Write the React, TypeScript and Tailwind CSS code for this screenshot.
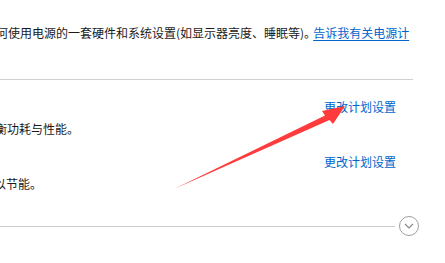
import React from "react";

export default function App() {
  const font = { fontFamily: '"Noto Sans CJK SC", "Noto Sans", sans-serif' };
  return (
    <div
      className="relative w-[445px] h-[263px] overflow-hidden bg-white text-[12px] leading-[16px] text-[#1a1a1a]"
      style={font}
    >
      <div className="flex flex-col">
        <div className="h-[80px] w-[413px] border-b border-[#d0d0d0] pt-[25px]">
          <div className="flex ml-[-4px] whitespace-nowrap">
            <span>何使用电源的一套硬件和系统设置(如显示器亮度、睡眠等)。</span>
            <span className="ml-[-3px] text-[#0066cc] underline underline-offset-[2px]">告诉我有关电源计</span>
          </div>
        </div>
        <div className="flex flex-col w-[413px]">
          <div className="flex justify-end pr-[17px] pt-[19px]">
            <span className="text-[#0066cc]">更改计划设置</span>
          </div>
          <div className="ml-[-5px] mt-[6px] whitespace-nowrap">衡功耗与性能。</div>
          <div className="flex justify-end pr-[17px] pt-[17px]">
            <span className="text-[#0066cc]">更改计划设置</span>
          </div>
          <div className="ml-[-6px] mt-[6px] whitespace-nowrap">以节能。</div>
        </div>
        <div className="flex items-center mt-[24px] w-[419px]">
          <div className="flex-1 h-px bg-[#cccccc]" />
          <div className="ml-[4px] w-[20px] h-[20px] rounded-full border border-[#a0a0a0] flex items-center justify-center">
            <svg width="10" height="6" viewBox="0 0 10 6">
              <path d="M1 1 L5 5 L9 1" fill="none" stroke="#8a8a8a" strokeWidth="1.2" />
            </svg>
          </div>
        </div>
      </div>
      <svg className="absolute left-0 top-0 pointer-events-none" width="445" height="263" viewBox="0 0 445 263">
        <polygon
          points="174,189 325,115.5 322,111 345,106 333,124 329.5,120 174,189"
          fill="#ff3b3b"
        />
      </svg>
    </div>
  );
}
